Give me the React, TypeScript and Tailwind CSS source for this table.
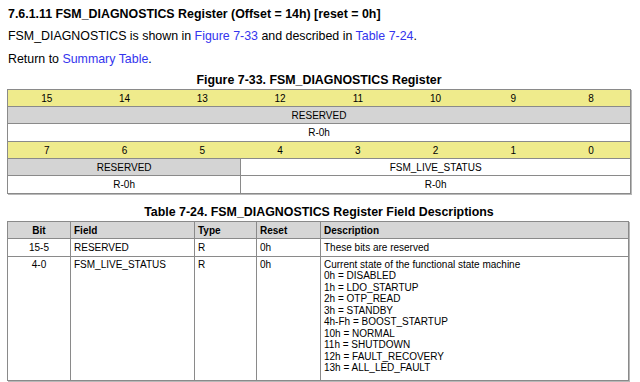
const bits = [15, 14, 13, 12, 11, 10, 9, 8];
const lowBits = [7, 6, 5, 4, 3, 2, 1, 0];

const states = [
  "0h = DISABLED",
  "1h = LDO_STARTUP",
  "2h = OTP_READ",
  "3h = STANDBY",
  "4h-Fh = BOOST_STARTUP",
  "10h = NORMAL",
  "11h = SHUTDOWN",
  "12h = FAULT_RECOVERY",
  "13h = ALL_LED_FAULT",
];

const BitRow = ({ nums }: { nums: number[] }) => (
  <div className="grid grid-cols-8 h-[17px] bg-[#efeb8c] border-b border-[#8a8a8a]">
    {nums.map((n) => (
      <div key={n} className="flex items-center justify-center">
        {n}
      </div>
    ))}
  </div>
);

export default function App() {
  return (
    <div className="min-h-screen bg-white px-[7px] pt-[5px] text-black text-[12.4px]" style={{ fontFamily: '"Liberation Sans", Arial, sans-serif' }}>
      {/* heading block */}
      <h3 className="pl-px h-[18px] leading-[18px] font-bold">
        7.6.1.11 FSM_DIAGNOSTICS Register (Offset = 14h) [reset = 0h]
      </h3>
      <p className="pl-px mt-[4px] h-[18px] leading-[18px]">
        FSM_DIAGNOSTICS is shown in <span className="text-[#3434ee]">Figure 7-33</span> and described in{" "}
        <span className="text-[#3434ee]">Table 7-24</span>.
      </p>
      <p className="pl-px mt-[5px] h-[18px] leading-[18px]">
        Return to <span className="text-[#3434ee]">Summary Table</span>.
      </p>

      {/* register map */}
      <div className="mt-[3px] h-[18px] leading-[18px] font-bold text-center w-[624px]">
        Figure 7-33. FSM_DIAGNOSTICS Register
      </div>
      <div className="w-[624px] border border-[#8a8a8a] border-b-0 shadow-[1px_1px_0_#b8b8b8] text-[10px]">
        <BitRow nums={bits} />
        <div className="h-[17px] flex items-center justify-center bg-[#d4d4d4] border-b border-[#8a8a8a]">
          RESERVED
        </div>
        <div className="h-[18px] flex items-center justify-center border-b border-[#8a8a8a]">R-0h</div>
        <BitRow nums={lowBits} />
        <div className="grid grid-cols-8 h-[17px] border-b border-[#8a8a8a]">
          <div className="col-span-3 flex items-center justify-center bg-[#d4d4d4] border-r border-[#8a8a8a]">
            RESERVED
          </div>
          <div className="col-span-5 flex items-center justify-center">FSM_LIVE_STATUS</div>
        </div>
        <div className="grid grid-cols-8 h-[18px] border-b border-[#8a8a8a]">
          <div className="col-span-3 flex items-center justify-center border-r border-[#8a8a8a]">R-0h</div>
          <div className="col-span-5 flex items-center justify-center">R-0h</div>
        </div>
      </div>

      {/* field descriptions */}
      <div className="mt-[10px] h-[17px] leading-[17px] font-bold text-center w-[624px]">
        Table 7-24. FSM_DIAGNOSTICS Register Field Descriptions
      </div>
      <table className="w-[622px] border-collapse text-[10px] shadow-[1px_1px_0_#b8b8b8]">
        <thead>
          <tr className="h-[17px] bg-[#d6d6d6] font-bold">
            <th className="w-[63px] border border-[#8a8a8a] text-center">Bit</th>
            <th className="w-[124px] border border-[#8a8a8a] text-left pl-[3px]">Field</th>
            <th className="w-[62px] border border-[#8a8a8a] text-left pl-[3px]">Type</th>
            <th className="w-[64px] border border-[#8a8a8a] text-left pl-[3px]">Reset</th>
            <th className="border border-[#8a8a8a] text-left pl-[3px]">Description</th>
          </tr>
        </thead>
        <tbody>
          <tr className="h-[18px]">
            <td className="border border-[#8a8a8a] text-center">15-5</td>
            <td className="border border-[#8a8a8a] pl-[3px]">RESERVED</td>
            <td className="border border-[#8a8a8a] pl-[3px]">R</td>
            <td className="border border-[#8a8a8a] pl-[3px]">0h</td>
            <td className="border border-[#8a8a8a] pl-[3px]">These bits are reserved</td>
          </tr>
          <tr className="h-[124px] align-top leading-[11.45px]">
            <td className="border border-[#8a8a8a] text-center pt-[2px]">4-0</td>
            <td className="border border-[#8a8a8a] pl-[3px] pt-[2px]">FSM_LIVE_STATUS</td>
            <td className="border border-[#8a8a8a] pl-[3px] pt-[2px]">R</td>
            <td className="border border-[#8a8a8a] pl-[3px] pt-[2px]">0h</td>
            <td className="border border-[#8a8a8a] pl-[3px] pt-[2px]">
              <div>Current state of the functional state machine</div>
              {states.map((s) => (
                <div key={s}>{s}</div>
              ))}
            </td>
          </tr>
        </tbody>
      </table>
    </div>
  );
}
